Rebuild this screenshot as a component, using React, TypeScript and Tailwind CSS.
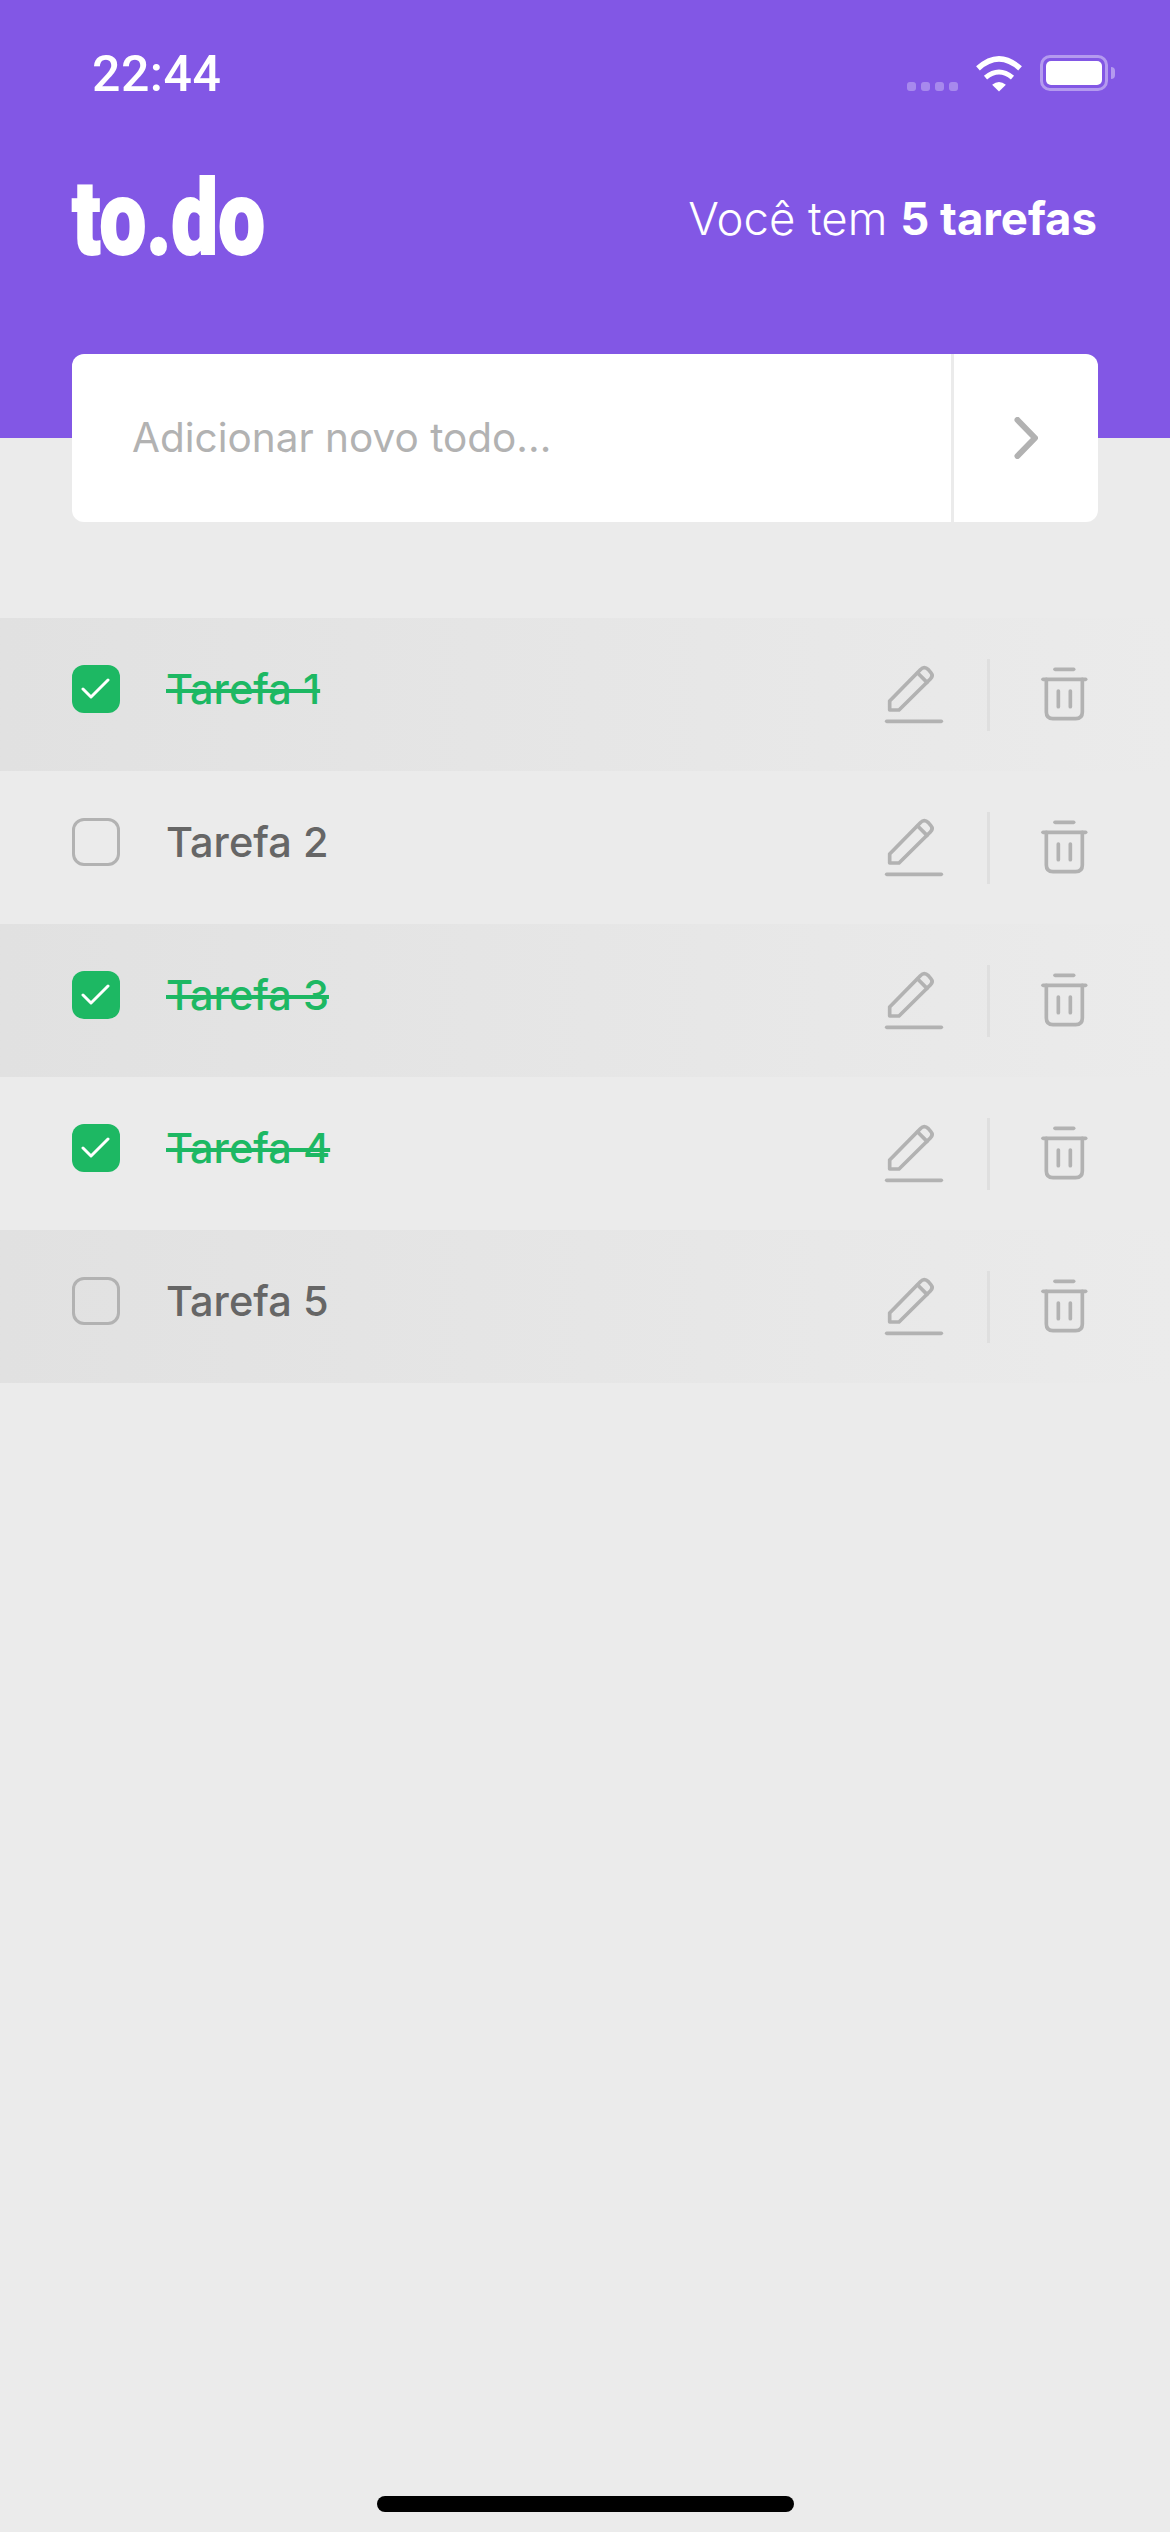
import React from 'react';

interface Task {
  id: number;
  title: string;
  done: boolean;
}

const TASKS: Task[] = [
  { id: 1, title: 'Tarefa 1', done: true },
  { id: 2, title: 'Tarefa 2', done: false },
  { id: 3, title: 'Tarefa 3', done: true },
  { id: 4, title: 'Tarefa 4', done: true },
  { id: 5, title: 'Tarefa 5', done: false },
];

const WifiIcon = () => (
  <svg width="48" height="37" viewBox="614 164 146 111" fill="none">
    <path d="M623 204 Q687 146 751 204" stroke="white" strokeWidth="17" />
    <path d="M646 232 Q687 198 728 232" stroke="white" strokeWidth="15" />
    <path d="M666 254 Q687 236 708 254 L687 274 Z" fill="white" />
  </svg>
);

const EditIcon = () => (
  <svg width="60" height="64" viewBox="75 100 180 192" fill="none" stroke="#B2B2B2" strokeWidth="11" strokeLinecap="round" strokeLinejoin="round">
    <path d="M92 214 L184 120 Q196 108 208 120 L215 128 Q224 138 214 148 L120 241 L92 241 Z" />
    <path d="M176 130 L204 158" />
    <path d="M83 275 H247" />
  </svg>
);

const TrashIcon = () => (
  <svg width="50" height="57" viewBox="530 110 150 171" fill="none" stroke="#B2B2B2" strokeWidth="11" strokeLinecap="round" strokeLinejoin="round">
    <path d="M578 120 H634" />
    <path d="M542 150 H670" />
    <path d="M552 150 V248 Q552 268 572 268 H640 Q660 268 660 248 V150" />
    <path d="M588 185 V232" />
    <path d="M624 185 V232" />
  </svg>
);

const Checkbox = ({ checked }: { checked: boolean }) =>
  checked ? (
    <div className="flex h-12 w-12 items-center justify-center rounded-xl bg-[#1DB863]">
      <svg width="30" height="22" viewBox="0 0 30 22" fill="none" stroke="white" strokeWidth="3" strokeLinecap="round" strokeLinejoin="round">
        <path d="M2 11 L10 19 L27 2" />
      </svg>
    </div>
  ) : (
    <div className="h-12 w-12 rounded-xl border-[3px] border-[#B2B2B2]" />
  );

export default function App() {
  return (
    <div className="flex h-[2532px] flex-col bg-[#EBEBEB] font-['Inter',sans-serif]">
      {/* Header */}
      <header className="h-[438px] shrink-0 bg-[#8257E5] text-white">
        <div className="flex h-[163px] items-start">
          <span className="ml-[92px] mt-[46px] font-['Roboto',sans-serif] text-[50px] font-medium leading-[56px] tracking-[0.5px]">
            22:44
          </span>
          <div className="ml-auto mr-[55px] mt-[55px] flex items-start">
            <div className="mt-[27px] flex gap-[5px]">
              {[0, 1, 2, 3].map((i) => (
                <span key={i} className="h-[9px] w-[9px] rounded-[3px] bg-white/30" />
              ))}
            </div>
            <div className="ml-[17px]">
              <WifiIcon />
            </div>
            <div className="ml-[17px] flex items-center">
              <div className="h-9 w-[68px] rounded-[10px] border-[3px] border-white/40 p-[3px]">
                <div className="h-full w-full rounded-[5px] bg-white" />
              </div>
              <div className="ml-[3px] h-3 w-1 rounded-r-full bg-white/40" />
            </div>
          </div>
        </div>

        <div className="flex items-center justify-between pl-[72px] pr-[73px]">
          <div className="w-[192px]">
            <span className="block origin-left scale-x-[0.8] whitespace-nowrap font-['Roboto',sans-serif] text-[104px] font-black leading-[112px] [-webkit-text-stroke:2px_white]">
              to.do
            </span>
          </div>
          <p className="text-[45.5px] font-light">
            Você tem <span className="font-bold">5 tarefas</span>
          </p>
        </div>
      </header>

      {/* New todo input */}
      <div className="mx-[72px] -mt-[84px] flex h-[168px] shrink-0 overflow-hidden rounded-xl bg-white">
        <div className="flex flex-1 items-center pl-[60px] text-[40.5px] text-[#B2B2B2]">
          Adicionar novo todo...
        </div>
        <div className="flex w-[147px] items-center justify-center border-l-[3px] border-[#EBEBEB]">
          <svg width="24" height="42" viewBox="0 0 24 42" fill="none" stroke="#B2B2B2" strokeWidth="6" strokeLinecap="round" strokeLinejoin="round">
            <path d="M3.5 3 L21 21 L3.5 39" />
          </svg>
        </div>
      </div>

      {/* Task list */}
      <div className="mt-24 flex flex-col">
        {TASKS.map((task, index) => (
          <div
            key={task.id}
            className={`flex h-[153px] items-center pl-[72px] pr-[81px] ${
              index % 2 === 0 ? 'bg-gradient-to-r from-[#E1E1E1] to-[#EBEBEB]' : ''
            }`}
          >
            <div className="mb-[11px] flex items-center gap-[46px]">
              <Checkbox checked={task.done} />
              <span
                className={`text-[41.5px] font-medium ${
                  task.done ? 'text-[#1DB863] line-through' : 'text-[#666666]'
                }`}
              >
                {task.title}
              </span>
            </div>
            <div className="ml-auto flex items-center">
              <EditIcon />
              <div className="ml-[43px] mr-[49px] h-[72px] w-[3px] bg-[#DFDFDF]" />
              <TrashIcon />
            </div>
          </div>
        ))}
      </div>

      {/* Home indicator */}
      <div className="mb-5 mt-auto flex justify-center">
        <div className="h-4 w-[417px] rounded-lg bg-black" />
      </div>
    </div>
  );
}
